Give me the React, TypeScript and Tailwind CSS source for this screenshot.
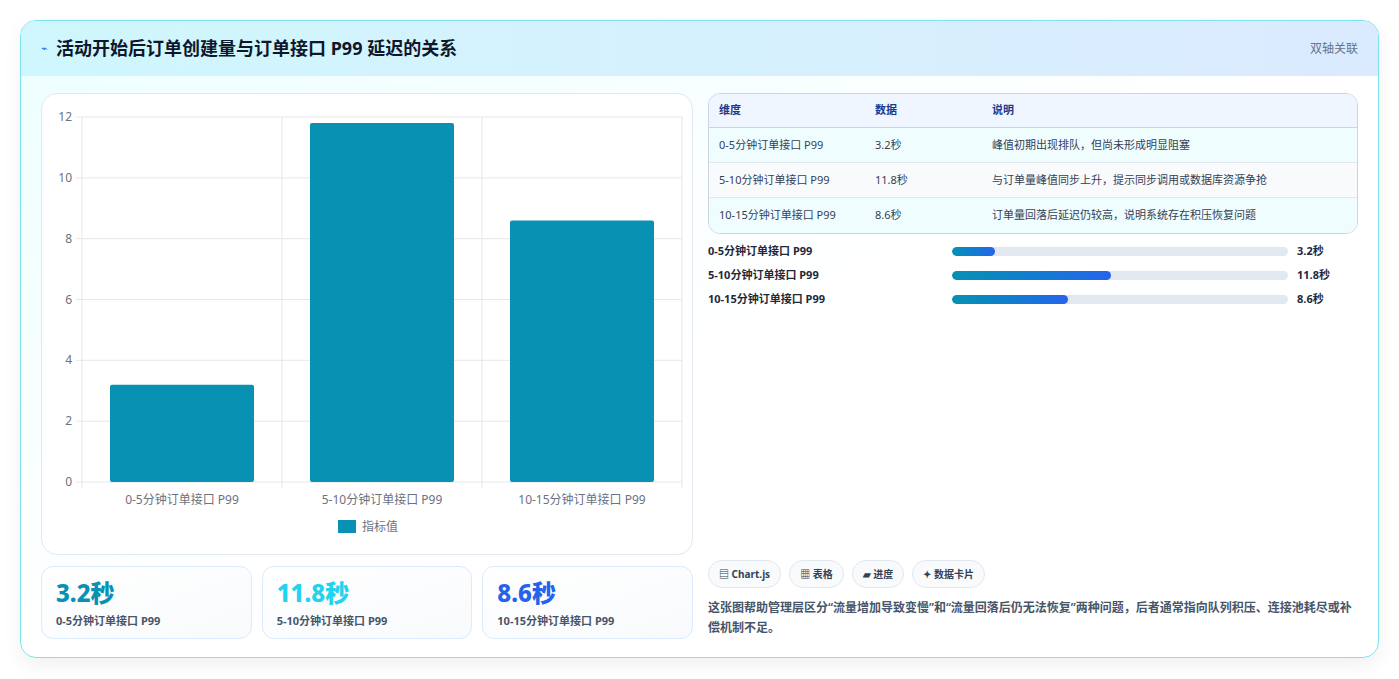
import React from "react";

const rows = [
  { k: "0-5分钟订单接口 P99", v: 3.2, d: "峰值初期出现排队，但尚未形成明显阻塞" },
  { k: "5-10分钟订单接口 P99", v: 11.8, d: "与订单量峰值同步上升，提示同步调用或数据库资源争抢" },
  { k: "10-15分钟订单接口 P99", v: 8.6, d: "订单量回落后延迟仍较高，说明系统存在积压恢复问题" },
];

function Chart() {
  const x0 = 40, x1 = 640, y0 = 388, yt = 23;
  const h = y0 - yt;
  const ticks = [0, 2, 4, 6, 8, 10, 12];
  return (
    <svg width="652" height="462" className="block">
      {ticks.map((t) => {
        const y = y0 - (t / 12) * h;
        return (
          <g key={t}>
            <line x1={x0 - 6} x2={x1} y1={y} y2={y} stroke="#e5e7eb" />
            <text x={x0 - 10} y={y + 4} textAnchor="end" fontSize="12" fill="#6b7280">{t}</text>
          </g>
        );
      })}
      {[0, 1, 2, 3].map((i) => (
        <line key={i} x1={x0 + i * 200} x2={x0 + i * 200} y1={yt} y2={y0 + 6} stroke="#e5e7eb" />
      ))}
      {rows.map((r, i) => {
        const bh = (r.v / 12) * h;
        return (
          <g key={i}>
            <rect x={x0 + i * 200 + 28} y={y0 - bh} width={144} height={bh} rx={2} fill="#0891b2" />
            <text x={x0 + i * 200 + 100} y={410} textAnchor="middle" fontSize="12" fill="#6b7280">{r.k}</text>
          </g>
        );
      })}
      <rect x={296} y={426} width={18} height={13} fill="#0891b2" />
      <text x={320} y={437} fontSize="12" fill="#6b7280">指标值</text>
    </svg>
  );
}

export default function App() {
  const colors = ["text-[#0891b2]", "text-[#22d3ee]", "text-[#2563eb]"];
  return (
    <div className="w-[1399px] h-[679px] bg-white p-5" style={{ fontFamily: '"Noto Sans", "Noto Sans CJK SC", sans-serif' }}>
      <div className="h-[638px] rounded-2xl border border-[#7de3f0] overflow-hidden bg-gradient-to-br from-[#ecfeff] via-white to-white shadow-[0_8px_20px_rgba(0,0,0,0.06)]">
        <div className="h-[55px] flex items-center justify-between px-5 bg-gradient-to-r from-[#cff7fd] to-[#dbeafe]">
          <div className="flex items-center gap-2">
            <span className="text-[#2563eb] text-[11px]">⌁</span>
            <span className="text-[18px] font-bold text-[#0f172a]">活动开始后订单创建量与订单接口 P99 延迟的关系</span>
          </div>
          <span className="text-[12px] text-[#64748b]">双轴关联</span>
        </div>
        <div className="flex gap-[15px] px-5 pt-[17px]">
          <div className="w-[652px] flex flex-col gap-[11px]">
            <div className="h-[462px] rounded-2xl border border-[#e2e8f0] bg-white overflow-hidden">
              <Chart />
            </div>
            <div className="grid grid-cols-3 gap-[10px]">
              {rows.map((r, i) => (
                <div key={i} className="h-[73px] rounded-xl border border-[#dbeafe] bg-gradient-to-br from-white to-[#f8fafc] px-[14px] pt-[10px]">
                  <div className={`text-[24px] font-extrabold leading-[32px] ${colors[i]}`}>{r.v}秒</div>
                  <div className="text-[11px] font-bold text-[#475569] mt-[4px]">{r.k}</div>
                </div>
              ))}
            </div>
          </div>
          <div className="w-[652px] h-[547px] flex flex-col justify-between">
            <div>
              <div className="rounded-xl border border-[#cbd5e1] overflow-hidden text-[11px] text-[#334155]">
                <div className="flex h-[34px] items-center bg-[#eff6ff] border-b border-[#cbd5e1] text-[#1e3a8a] font-semibold">
                  <div className="w-[166px] pl-[10px]">维度</div>
                  <div className="w-[117px]">数据</div>
                  <div>说明</div>
                </div>
                {rows.map((r, i) => (
                  <div key={i} className={`flex h-[35px] items-center ${i < 2 ? "border-b border-[#e2e8f0]" : ""} ${i === 1 ? "bg-[#f8fafc]" : "bg-[#f0fdff]"}`}>
                    <div className="w-[166px] pl-[10px]">{r.k}</div>
                    <div className="w-[117px]">{r.v}秒</div>
                    <div>{r.d}</div>
                  </div>
                ))}
              </div>
              <div className="mt-[8px] flex flex-col gap-[6px]">
                {rows.map((r, i) => (
                  <div key={i} className="flex items-center h-[18px] text-[11px] font-bold text-[#1e293b]">
                    <div className="w-[244px]">{r.k}</div>
                    <div className="w-[336px] h-[9px] rounded-full bg-[#e2e8f0] overflow-hidden">
                      <div className="h-full rounded-full bg-gradient-to-r from-[#0891b2] to-[#2563eb]" style={{ width: `${(r.v / 25) * 100}%` }} />
                    </div>
                    <div className="ml-[9px]">{r.v}秒</div>
                  </div>
                ))}
              </div>
            </div>
            <div className="pb-[2px]">
              <div className="flex gap-[8px]">
                {["▤ Chart.js", "▦ 表格", "▰ 进度", "✦ 数据卡片"].map((c) => (
                  <span key={c} className="h-[28px] px-[10px] flex items-center rounded-full border border-[#e2e8f0] bg-[#f8fafc] text-[10px] font-bold text-[#334155]">{c}</span>
                ))}
              </div>
              <p className="mt-[10px] text-[12px] leading-[20px] font-semibold text-[#475569]">
                这张图帮助管理层区分“流量增加导致变慢”和“流量回落后仍无法恢复”两种问题，后者通常指向队列积压、连接池耗尽或补偿机制不足。
              </p>
            </div>
          </div>
        </div>
      </div>
    </div>
  );
}
